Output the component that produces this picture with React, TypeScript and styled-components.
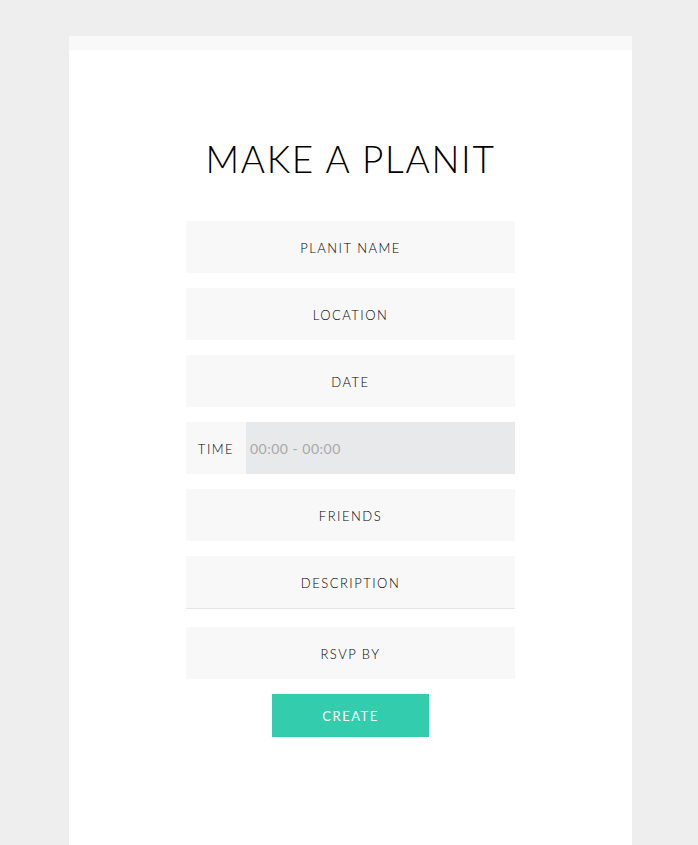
import React from "react";
import styled, { createGlobalStyle } from "styled-components";

const Global = createGlobalStyle`
  html, body { margin: 0; padding: 0; background: #eeeeee; }
  body { font-family: Lato, "Open Sans", sans-serif; }
`;

const Page = styled.div`
  min-height: 845px;
  padding-top: 36px;
  box-sizing: border-box;
  display: flex;
  justify-content: flex-start;
`;

const Card = styled.div`
  margin-left: 69px;
  width: 563px;
  min-height: 809px;
  background: #ffffff;
  display: flex;
  flex-direction: column;
  align-items: center;
`;

const TopStrip = styled.div`
  align-self: stretch;
  height: 14px;
  background: #f9f9f9;
`;

const Title = styled.h1`
  margin: 86px 0 0;
  font-family: Lato, sans-serif;
  font-weight: 300;
  font-size: 37px;
  line-height: 46px;
  letter-spacing: 1.7px;
  color: #000;
`;

const Form = styled.form`
  margin-top: 39px;
  width: 329px;
  display: flex;
  flex-direction: column;
  align-items: center;
`;

const Field = styled.input<{ $gap?: number; $underline?: boolean }>`
  width: 100%;
  height: 50px;
  box-sizing: content-box;
  padding: 2px 0 0;
  margin-bottom: ${(p) => p.$gap ?? 15}px;
  border: none;
  border-bottom: ${(p) => (p.$underline ? "1px solid #e6e6e6" : "none")};
  background: #f8f8f8;
  text-align: center;
  font-family: Lato, sans-serif;
  font-weight: 300;
  font-size: 13px;
  letter-spacing: 1.5px;
  color: #000;
  outline: none;
  &::placeholder {
    color: #000;
    opacity: 1;
  }
`;

const TimeRow = styled.div`
  width: 100%;
  height: 52px;
  margin-bottom: 15px;
  display: flex;
  background: #f8f8f8;
`;

const TimeLabel = styled.label`
  width: 60px;
  padding-top: 2px;
  box-sizing: border-box;
  display: flex;
  align-items: center;
  justify-content: center;
  font-weight: 300;
  font-size: 13px;
  letter-spacing: 1.5px;
  color: #000;
`;

const TimeInput = styled.input`
  flex: 1;
  border: none;
  background: #e8e9ea;
  padding: 0 4px;
  font-family: Lato, sans-serif;
  font-size: 14px;
  letter-spacing: 0.5px;
  color: #999;
  outline: none;
  &::placeholder {
    color: #a8a8a8;
    opacity: 1;
  }
`;

const CreateButton = styled.button`
  width: 157px;
  height: 43px;
  border: none;
  background: #33ccad;
  color: #ffffff;
  font-family: Lato, sans-serif;
  font-size: 13px;
  letter-spacing: 1.5px;
  cursor: pointer;
`;

export default function App() {
  return (
    <>
      <Global />
      <Page>
        <Card>
          <TopStrip />
          <Title>MAKE A PLANIT</Title>
          <Form onSubmit={(e) => e.preventDefault()}>
            <Field placeholder="PLANIT NAME" />
            <Field placeholder="LOCATION" />
            <Field placeholder="DATE" />
            <TimeRow>
              <TimeLabel>TIME</TimeLabel>
              <TimeInput placeholder="00:00 - 00:00" />
            </TimeRow>
            <Field placeholder="FRIENDS" />
            <Field placeholder="DESCRIPTION" $underline $gap={18} />
            <Field placeholder="RSVP BY" />
            <CreateButton type="submit">CREATE</CreateButton>
          </Form>
        </Card>
      </Page>
    </>
  );
}
